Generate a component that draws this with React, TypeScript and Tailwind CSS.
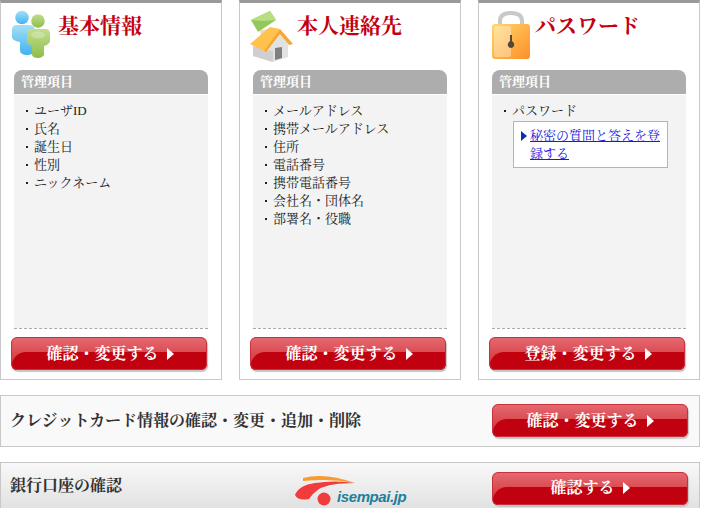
import React from 'react';

const FONT = "font-['Liberation_Serif','Noto_Serif_CJK_JP','Noto_Sans_CJK_JP',serif]";

function PeopleIcon() {
  return (
    <svg width="40" height="50" viewBox="0 0 40 50" className="block">
      <defs>
        <linearGradient id="blue" x1="0" y1="0" x2="0" y2="1">
          <stop offset="0" stopColor="#a5def8" />
          <stop offset="1" stopColor="#3fb4ef" />
        </linearGradient>
        <linearGradient id="green" x1="0" y1="0" x2="0" y2="1">
          <stop offset="0" stopColor="#c3de8e" />
          <stop offset="1" stopColor="#8cbe49" />
        </linearGradient>
      </defs>
      <circle cx="11" cy="7.5" r="6.8" fill="url(#blue)" />
      <path d="M6 15 h12 q6 0 6 6 v20 q-2 4 -8 4 q-6 0 -7 -4 v-9 q-6 -1 -8 -4 v-8 q0 -5 5 -5z" fill="url(#blue)" />
      <circle cx="27" cy="11" r="6.8" fill="url(#green)" />
      <path d="M21 19 h13 q5 0 5 5 v8 q-2 3 -6 4 v9 q-2 3 -6 3 q-5 0 -6 -3 v-9 q-4 -1 -5 -4 v-8 q0 -5 5 -5z" fill="url(#green)" />
      <ellipse cx="27" cy="25" rx="7" ry="3.5" fill="#ffffff" opacity=".25" />
    </svg>
  );
}

function HouseIcon() {
  return (
    <svg width="46" height="54" viewBox="0 0 46 54" className="block">
      <path d="M4 36 V46 L24 52 L39 47 V34 L31 23 L18 40Z" fill="#e2e2e2" />
      <path d="M4 36 V46 L24 52 V41 L18 40Z" fill="#cfcfcf" />
      <path d="M26 38 L33 37 V48 L26 50Z" fill="#7f7f7f" />
      <path d="M11 20 L22 19 L24 28 L13 30Z" fill="#e8dcbc" />
      <path d="M1 34 L21 17 L31 19 L17 42Z" fill="#ffc24d" />
      <path d="M31 19 L44 34 L40 35 L31 24 L17 42 L15 41Z" fill="#f9a62f" />
      <path d="M2 10 L21 1 L27 10 L9 22Z" fill="#93c95a" />
      <path d="M2 10 L21 1 L27 10 L14 11Z" fill="#b8de84" />
    </svg>
  );
}

function LockIcon() {
  return (
    <svg width="38" height="48" viewBox="0 0 38 48" className="block">
      <defs>
        <linearGradient id="lock" x1="0" y1="0" x2="1" y2="1">
          <stop offset="0" stopColor="#ffd86a" />
          <stop offset="1" stopColor="#fd8f28" />
        </linearGradient>
      </defs>
      <path d="M8 14 V10 Q8 2 19 2 Q30 2 30 10 V14" fill="none" stroke="#c9c9c9" strokeWidth="4" />
      <rect x="0" y="13" width="38" height="35" rx="3" fill="url(#lock)" />
      <rect x="2" y="15" width="17" height="31" rx="2" fill="#fff" opacity=".35" />
      <path d="M18 24 h2 v6 q3 2 2 5 q-1 2 -3 2 q-2 0 -3 -2 q-1 -3 2 -5z" fill="#54483a" />
    </svg>
  );
}

function RedButton({ label, className, textClass }: { label: string; className?: string; textClass?: string }) {
  return (
    <div className={`relative h-[33px] w-[196px] shrink-0 overflow-hidden rounded-[6px] bg-gradient-to-b from-[#e56a72] to-[#cd1e2c] shadow-[1px_2px_1px_#c4c4c4] ${className ?? ''}`}>
      <div className="absolute bottom-0 left-[1px] right-0 top-[15px] rounded-tl-[14px] bg-[#c10010]" />
      <div className="absolute inset-0 rounded-[6px] border border-[#c9303a]" />
      <div className={`relative flex h-full items-center justify-center gap-[8px] text-[16px] font-bold leading-none text-white ${textClass ?? ''}`}>
        <span>{label}</span>
        <span className="h-0 w-0 border-y-[6.5px] border-l-[7px] border-y-transparent border-l-white" />
      </div>
    </div>
  );
}

const CARDS = [
  { title: '基本情報', icon: <PeopleIcon />, iconClass: 'w-[46px] pl-[10px] pt-[7px]', items: ['ユーザID', '氏名', '誕生日', '性別', 'ニックネーム'], button: '確認・変更する' },
  { title: '本人連絡先', icon: <HouseIcon />, iconClass: 'w-[47px] pl-[9px] pt-[7px]', items: ['メールアドレス', '携帯メールアドレス', '住所', '電話番号', '携帯電話番号', '会社名・団体名', '部署名・役職'], button: '確認・変更する' },
  { title: 'パスワード', icon: <LockIcon />, iconClass: 'w-[42px] pl-[13px] pt-[8px]', items: ['パスワード'], button: '登録・変更する', link: true },
];

export default function App() {
  return (
    <div className={`h-[508px] w-[701px] overflow-hidden bg-white ${FONT}`}>
      <div className="flex gap-[17px]">
        {CARDS.map((card) => (
          <div key={card.title} className="h-[380px] w-[222px] border border-t-[3px] border-[#c8c8c8] border-t-[#999999] pb-[8px]">
            <div className="flex h-[67px]">
              <div className={`${card.iconClass} shrink-0 box-content`}>{card.icon}</div>
              <h2 className="pl-[1px] pt-[10px] text-[21px] font-bold leading-[26px] text-[#c40010]">{card.title}</h2>
            </div>
            <div className="mx-[13px] flex h-[24px] items-center rounded-t-[8px] bg-[#adadad] pl-[7px] text-[13px] font-bold text-white">管理項目</div>
            <div className="mx-[13px] mt-[1px] h-[233px] bg-[#f3f3f3] pl-[12px] pr-[8px] pt-[7px]">
              <ul className="text-[13px] leading-[18px] text-[#222222]">
                {card.items.map((item) => (
                  <li key={item} className="flex items-center">
                    <span className="mr-[6px] h-[2px] w-[2px] bg-[#222222]" />
                    {item}
                  </li>
                ))}
              </ul>
              {card.link && (
                <div className="ml-[9px] mt-[1px] flex w-[155px] border border-[#b4b4b4] bg-white pb-[4px] pl-[7px] pr-[4px] pt-[5px]">
                  <span className="mr-[3px] mt-[4px] h-0 w-0 shrink-0 border-y-[5px] border-l-[6px] border-y-transparent border-l-[#0a2fb4]" />
                  <a href="#" className="text-[13px] leading-[18px] text-[#1a1ae0] underline">秘密の質問と答えを登録する</a>
                </div>
              )}
            </div>
            <div className="mx-[13px] border-t border-dashed border-[#aaaaaa]" />
            <RedButton label={card.button} className="ml-[10px] mt-[8px]" textClass="pl-[2px]" />
          </div>
        ))}
      </div>

      <div className="mt-[15px] flex h-[52px] w-[700px] items-center justify-between border border-[#c8c8c8] bg-[#f9f9f9] pl-[9px] pr-[11px]">
        <span className="text-[16px] font-bold text-[#333333]">クレジットカード情報の確認・変更・追加・削除</span>
        <RedButton label="確認・変更する" className="mb-[1px]" />
      </div>

      <div className="mt-[15px] flex h-[54px] w-[700px] items-center border border-[#c8c8c8] bg-gradient-to-b from-[#f8f8f8] to-[#dedede] pl-[9px] pr-[11px]">
        <span className="mb-[7px] w-[285px] shrink-0 text-[16px] font-bold text-[#333333]">銀行口座の確認</span>
        <div className="flex h-[34px] w-[197px] shrink-0 items-end">
          <svg width="60" height="31" viewBox="0 0 60 31" className="block shrink-0">
            <path d="M8 3 Q30 -3 60 8 Q35 3 8 6Z" fill="#f79b2e" />
            <path d="M0 20 Q4 10 20 8 Q40 5 60 8 Q35 8 24 14 Q18 18 14 24 Q3 26 0 20Z" fill="#f03c3c" />
            <circle cx="29" cy="24" r="6.5" fill="#f03c3c" />
          </svg>
          <span className="-ml-[18px] font-['Liberation_Sans',sans-serif] text-[15px] font-bold italic leading-[18px] tracking-[-0.4px] text-[#1d7f9c]">isempai.jp</span>
        </div>
        <RedButton label="確認する" className="mb-[2px]" />
      </div>
    </div>
  );
}
